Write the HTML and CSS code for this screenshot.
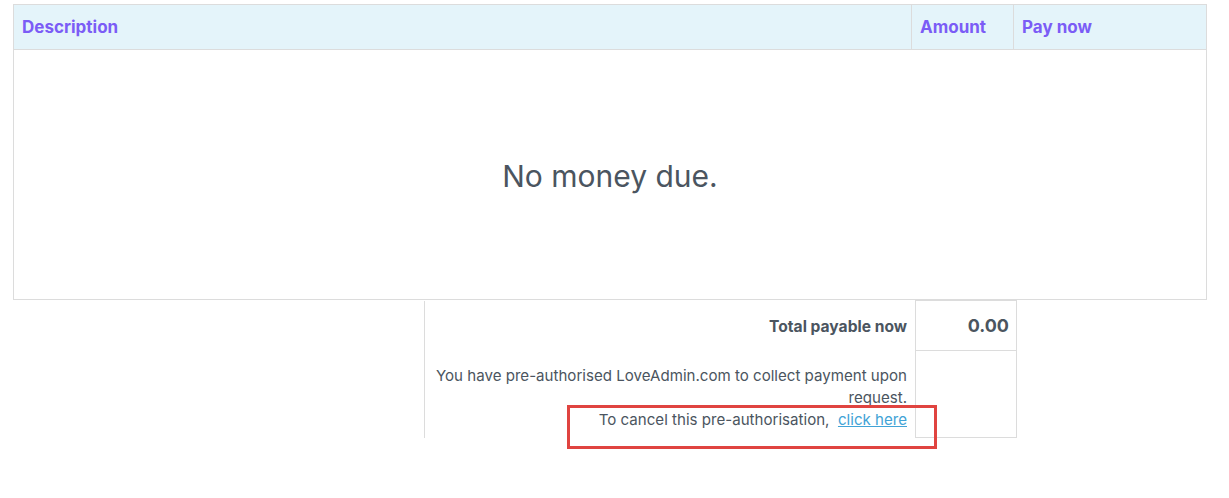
FILE: index.html
```html
<!DOCTYPE html>
<html lang="en">
<head>
    <meta charset="UTF-8">
    <meta name="viewport" content="width=device-width, initial-scale=1.0">
    <title>Payments</title>
    <link rel="stylesheet" href="styles.css">
</head>
<body>
    <table class="fees">
        <thead>
            <tr>
                <th class="col-desc">Description</th>
                <th class="col-amount">Amount</th>
                <th class="col-pay">Pay now</th>
            </tr>
        </thead>
        <tbody>
            <tr>
                <td colspan="3" class="empty">No money due.</td>
            </tr>
        </tbody>
    </table>

    <div class="totals-wrap">
        <table class="totals">
            <tr>
                <td class="label total-label">Total payable now</td>
                <td class="value">0.00</td>
            </tr>
            <tr>
                <td class="label note">
                    You have pre-authorised LoveAdmin.com to collect payment upon request.<br>
                    To cancel this pre-authorisation,&nbsp; <a href="#">click here</a>
                </td>
                <td class="value blank"></td>
            </tr>
        </table>
        <div class="highlight"></div>
    </div>
</body>
</html>
```

FILE: styles.css
```css
body {
    margin: 4px 22px 0 13px;
    padding-bottom: 60px;
    font-family: Inter, Roboto, "Liberation Sans", sans-serif;
    color: #4b5560;
    background: #fff;
}

table {
    border-collapse: collapse;
}

.fees {
    width: 100%;
}

.fees th {
    background: #e4f4fa;
    color: #7b5cf6;
    font-size: 17px;
    font-weight: 700;
    text-align: left;
    height: 44px;
    padding: 0 8px;
    border: 1px solid #dcdcdc;
}

.fees .col-amount {
    width: 85px;
}

.fees .col-pay {
    width: 176px;
}

.fees .empty {
    height: 244px;
    padding-top: 4px;
    border: 1px solid #dcdcdc;
    text-align: center;
    font-size: 30px;
    color: #4b5560;
}

.totals-wrap {
    position: relative;
    margin-left: 411px;
    width: 593px;
}

.totals {
    width: 593px;
    font-size: 15.1px;
}

.totals td {
    padding: 0;
}

.totals .label {
    width: 482px;
    text-align: right;
    padding-right: 8px;
    border-left: 1px solid #dcdcdc;
}

.totals .total-label {
    height: 48px;
    padding-top: 2px;
    font-size: 15.6px;
    font-weight: 700;
}

.totals .note {
    line-height: 22px;
    padding-top: 14px;
    padding-bottom: 7px;
    vertical-align: top;
}

.totals .note a {
    color: #42a3d6;
}

.totals .value {
    border: 1px solid #dcdcdc;
    text-align: right;
    padding-right: 7px;
    font-size: 18px;
    font-weight: 700;
}

.highlight {
    position: absolute;
    left: 143px;
    top: 105px;
    width: 364px;
    height: 38px;
    border: 3px solid #e04440;
}
```
